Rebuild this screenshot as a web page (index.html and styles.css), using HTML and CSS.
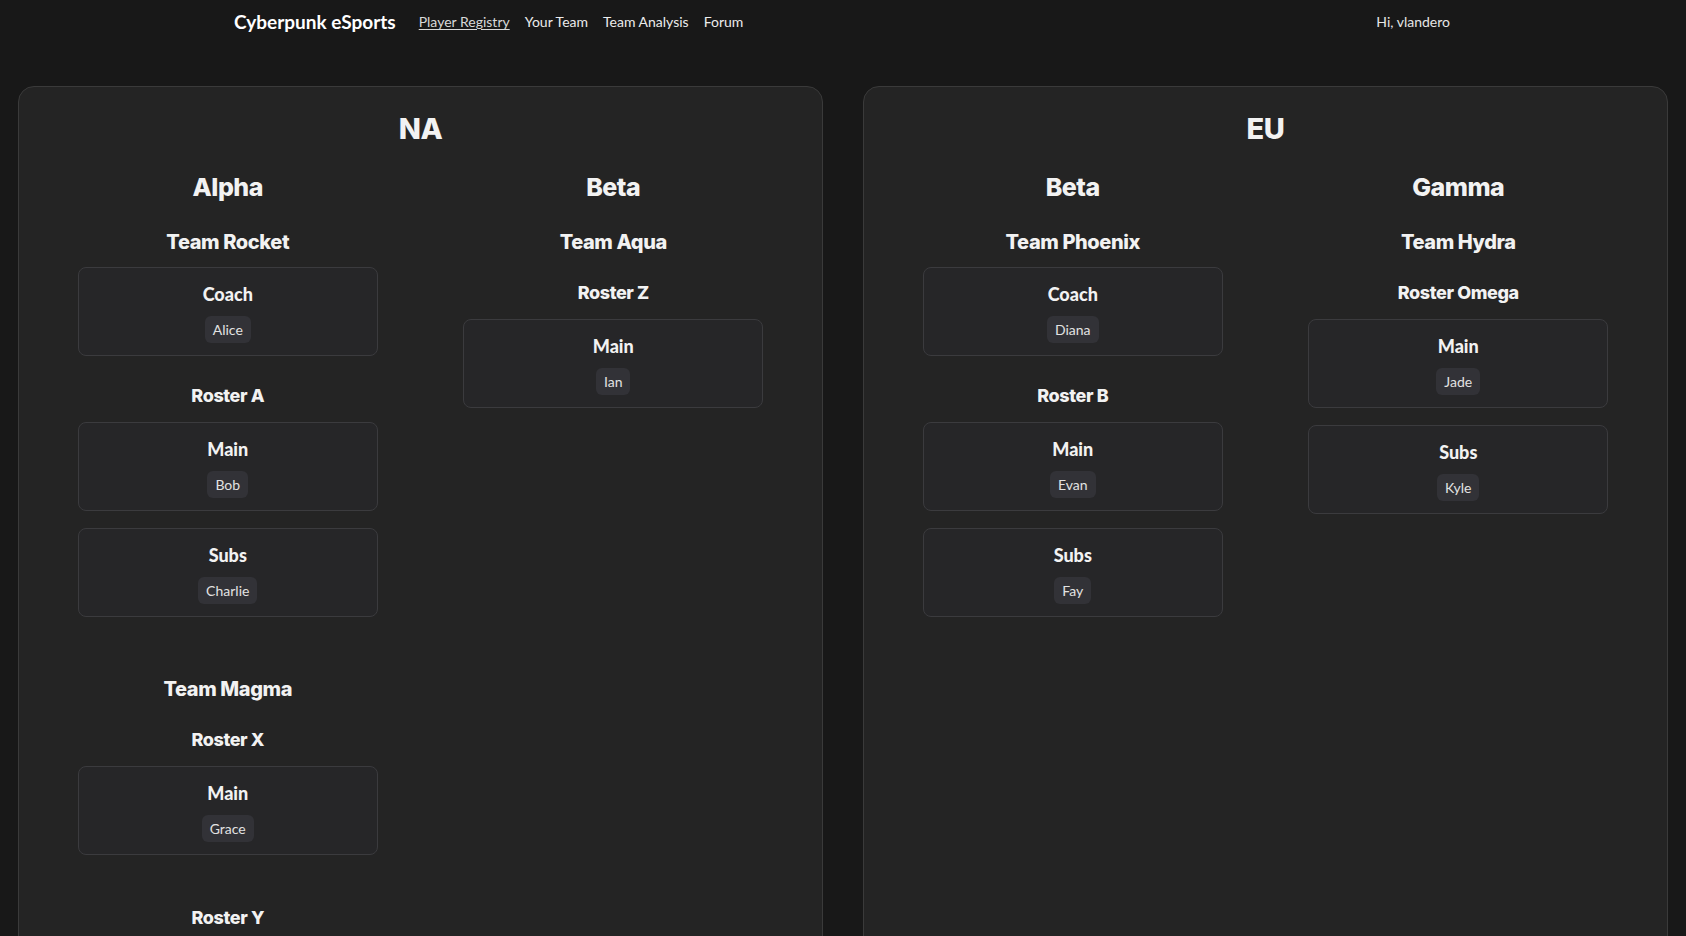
FILE: index.html
```html
<!DOCTYPE html>
<html lang="en">
<head>
<meta charset="utf-8">
<title>Cyberpunk eSports</title>
<link rel="stylesheet" href="styles.css">
</head>
<body>
<header class="nav">
  <div class="nav-inner">
    <div class="nav-left">
      <span class="brand">Cyberpunk eSports</span>
      <a class="nav-link active" href="#">Player Registry</a>
      <a class="nav-link" href="#">Your Team</a>
      <a class="nav-link" href="#">Team Analysis</a>
      <a class="nav-link" href="#">Forum</a>
    </div>
    <span class="greeting">Hi, vlandero</span>
  </div>
</header>
<main class="regions">
  <section class="region">
    <h2 class="region-title">NA</h2>
    <div class="leagues">
      <div class="league">
        <h3 class="league-title">Alpha</h3>
        <div class="team">
          <h4 class="team-title">Team Rocket</h4>
          <div class="card coach"><div class="card-title">Coach</div><span class="badge">Alice</span></div>
          <div class="roster">
            <h5 class="roster-title">Roster A</h5>
            <div class="card"><div class="card-title">Main</div><span class="badge">Bob</span></div>
            <div class="card"><div class="card-title">Subs</div><span class="badge">Charlie</span></div>
          </div>
        </div>
        <div class="team">
          <h4 class="team-title">Team Magma</h4>
          <div class="roster">
            <h5 class="roster-title">Roster X</h5>
            <div class="card"><div class="card-title">Main</div><span class="badge">Grace</span></div>
          </div>
          <div class="roster">
            <h5 class="roster-title">Roster Y</h5>
          </div>
        </div>
      </div>
      <div class="league">
        <h3 class="league-title">Beta</h3>
        <div class="team">
          <h4 class="team-title">Team Aqua</h4>
          <div class="roster">
            <h5 class="roster-title">Roster Z</h5>
            <div class="card"><div class="card-title">Main</div><span class="badge">Ian</span></div>
          </div>
        </div>
      </div>
    </div>
  </section>
  <section class="region">
    <h2 class="region-title">EU</h2>
    <div class="leagues">
      <div class="league">
        <h3 class="league-title">Beta</h3>
        <div class="team">
          <h4 class="team-title">Team Phoenix</h4>
          <div class="card coach"><div class="card-title">Coach</div><span class="badge">Diana</span></div>
          <div class="roster">
            <h5 class="roster-title">Roster B</h5>
            <div class="card"><div class="card-title">Main</div><span class="badge">Evan</span></div>
            <div class="card"><div class="card-title">Subs</div><span class="badge">Fay</span></div>
          </div>
        </div>
      </div>
      <div class="league">
        <h3 class="league-title">Gamma</h3>
        <div class="team">
          <h4 class="team-title">Team Hydra</h4>
          <div class="roster">
            <h5 class="roster-title">Roster Omega</h5>
            <div class="card"><div class="card-title">Main</div><span class="badge">Jade</span></div>
            <div class="card"><div class="card-title">Subs</div><span class="badge">Kyle</span></div>
          </div>
        </div>
      </div>
    </div>
  </section>
</main>
</body>
</html>
```
FILE: styles.css
```css
* { box-sizing: border-box; }
html, body { margin: 0; padding: 0; }
body {
  background: #181818;
  color: #f2f2f2;
  font-family: "Lato", "Noto Sans", sans-serif;
}
.nav { height: 43px; display: flex; align-items: center; }
.nav-inner {
  width: 1222px;
  margin: 0 auto;
  display: flex;
  align-items: center;
  justify-content: space-between;
}
.nav-left { display: flex; align-items: center; gap: 15px; }
.brand { font-weight: 700; font-size: 19px; color: #ffffff; margin-right: 8px; margin-left: 2px; }
.nav-link { color: #ececec; font-size: 14px; text-decoration: none; }
.nav-link.active { color: #d8d8d8; text-decoration: underline; text-underline-offset: 2px; }
.greeting { font-size: 14px; color: #e6e6e6; margin-right: 4px; }

.regions {
  display: grid;
  grid-template-columns: 1fr 1fr;
  gap: 40px;
  padding: 43px 18px 0;
}
.region {
  background: #242424;
  border: 1px solid #3a3a3a;
  border-radius: 16px;
  padding: 16px 16px 40px;
  min-height: 900px;
}
.region-title {
  margin: 0;
  text-align: center;
  font-family: "Inter", sans-serif;
  font-weight: 800;
  font-size: 29px;
  line-height: 51px;
  letter-spacing: -0.5px;
}
.leagues { display: grid; grid-template-columns: 1fr 1fr; }
.league { display: flex; flex-direction: column; align-items: center; }
.league-title {
  margin: 16.5px 0 0;
  font-family: "Inter", sans-serif;
  font-weight: 800;
  font-size: 25px;
  line-height: 32px;
  letter-spacing: -0.5px;
}
.team {
  display: flex; flex-direction: column; align-items: center;
  margin-top: 27.5px;
  margin-bottom: 34.5px;
}
.team + .team { margin-top: 0; }
.team-title {
  margin: 0;
  font-family: "Inter", sans-serif;
  font-weight: 800;
  font-size: 20px;
  line-height: 25px;
  letter-spacing: -0.4px;
}
.roster {
  display: flex; flex-direction: column; align-items: center; gap: 17px;
  margin-top: 25px;
  margin-bottom: 25.5px;
}
.card + .roster { margin-top: 26.5px; }
.roster-title {
  margin: 0 0 -3px;
  font-family: "Inter", sans-serif;
  font-weight: 800;
  font-size: 18px;
  line-height: 25px;
  letter-spacing: -0.4px;
}
.card {
  width: 300px;
  height: 89px;
  background: #262628;
  border: 1px solid #3b3b3e;
  border-radius: 8px;
  padding: 14px 16px 12px;
  display: flex; flex-direction: column; align-items: center;
}
.coach { margin-top: 12px; }
.card-title {
  font-weight: 900;
  font-size: 18px;
  line-height: 24px;
  margin-bottom: 10px;
}
.badge {
  display: inline-block;
  height: 27px;
  line-height: 27px;
  padding: 0 8px;
  border-radius: 6px;
  background: #323237;
  color: #e2e2e2;
  font-size: 14px;
}
```
